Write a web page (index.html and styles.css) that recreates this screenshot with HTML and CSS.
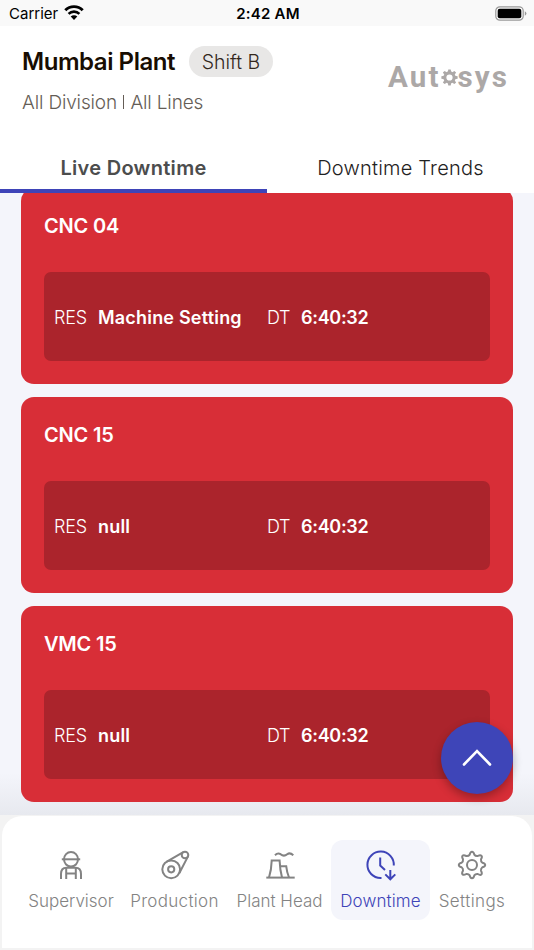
FILE: index.html
```
<!DOCTYPE html>
<html lang="en">
<head>
  <title>Autosys | Downtime</title>
  <meta charset="UTF-8">
  <meta name="viewport" content="width=device-width, initial-scale=1.0">
  <link rel="stylesheet" href="styles.css">
</head>
<body>
  <div class="app">
    <div class="status">
      <div class="carrier">
        <span>Carrier</span>
        <svg width="20" height="15" viewBox="0 0 20 15">
          <path d="M1.3 5.3 A12.2 12.2 0 0 1 18.7 5.3" fill="none" stroke="#000" stroke-width="2.9"/>
          <path d="M4.6 8.9 A7.6 7.6 0 0 1 15.4 8.9" fill="none" stroke="#000" stroke-width="2.6"/>
          <path d="M10 15 L6.7 11.6 A4.7 4.7 0 0 1 13.3 11.6 Z"/>
        </svg>
      </div>
      <span class="time">2:42 AM</span>
      <svg class="battery" width="32" height="16" viewBox="0 0 32 16">
        <rect x="0.8" y="0.8" width="27.4" height="13.4" rx="4" fill="none" stroke="#999" stroke-width="1.2"/>
        <rect x="2.7" y="2.7" width="23.6" height="9.6" rx="2"/>
        <path d="M29.8 5.2 Q31.4 6 31.4 7.5 Q31.4 9 29.8 9.8 Z" fill="#999"/>
      </svg>
    </div>

    <header class="header">
      <div>
        <div class="plant">
          <h1>Mumbai Plant</h1>
          <span class="shift"><span>Shift B</span></span>
        </div>
        <p class="lines">All Division <i></i> All Lines</p>
      </div>
      <div class="logo">
        <span>Aut</span>
        <svg width="17" height="17" viewBox="-9 -9 18 18">
          <circle r="4.9" fill="none" stroke="#aca8a7" stroke-width="3.2"/>
          <g fill="#aca8a7">
            <path id="tooth" d="M-1.9 -5.5 L-1.3 -8.6 H1.3 L1.9 -5.5 Z"/>
            <use href="#tooth" transform="rotate(45)"/>
            <use href="#tooth" transform="rotate(90)"/>
            <use href="#tooth" transform="rotate(135)"/>
            <use href="#tooth" transform="rotate(180)"/>
            <use href="#tooth" transform="rotate(225)"/>
            <use href="#tooth" transform="rotate(270)"/>
            <use href="#tooth" transform="rotate(315)"/>
          </g>
        </svg>
        <span>sys</span>
      </div>
    </header>

    <div class="tabs">
      <div class="tab active"><span>Live Downtime</span></div>
      <div class="tab"><span>Downtime Trends</span></div>
    </div>

    <main class="list">
      <div class="card">
        <h2>CNC 04</h2>
        <div class="info">
          <div class="res"><span class="label">RES</span><b>Machine Setting</b></div>
          <div class="dt"><span class="label">DT</span><b>6:40:32</b></div>
        </div>
      </div>
      <div class="card">
        <h2>CNC 15</h2>
        <div class="info">
          <div class="res"><span class="label">RES</span><b>null</b></div>
          <div class="dt"><span class="label">DT</span><b>6:40:32</b></div>
        </div>
      </div>
      <div class="card">
        <h2>VMC 15</h2>
        <div class="info">
          <div class="res"><span class="label">RES</span><b>null</b></div>
          <div class="dt"><span class="label">DT</span><b>6:40:32</b></div>
        </div>
      </div>
      <button class="to-top" aria-label="Up">
        <svg width="30" height="18" viewBox="0 0 30 18"><path d="M2 16.5 L15 3 L28 16.5" fill="none" stroke="#fff" stroke-width="2.6" stroke-linecap="round"/></svg>
      </button>
    </main>

    <div class="bottom">
      <nav class="nav">
        <a class="item supervisor">
          <svg width="32" height="32" viewBox="0 0 32 32">
            <path d="M6.8 10.3 H25.2"/>
            <path d="M9 10.3 A7 7.3 0 0 1 23 10.3 A7 7.3 0 0 1 9 10.3"/>
            <path d="M6 30 V25 Q6 18.8 11.5 18.8 H20.5 Q26 18.8 26 25 V30"/>
            <path d="M11.2 19 V30 M20.8 19 V30 M11.2 24.5 H20.8"/>
          </svg>
          <span>Supervisor</span>
        </a>
        <a class="item production">
          <svg width="32" height="32" viewBox="0 0 32 32">
            <circle cx="12.2" cy="20.3" r="8.9"/>
            <circle cx="12.2" cy="20.3" r="3.1"/>
            <circle cx="26" cy="6" r="3.3"/>
            <path d="M7.8 12.6 L24.3 3.1 M29 7.4 L20.4 24"/>
          </svg>
          <span>Production</span>
        </a>
        <a class="item plant-head">
          <svg width="32" height="32" viewBox="0 0 32 32">
            <path d="M2.3 28.6 H30.7"/>
            <path d="M5 28.5 Q7.4 21 7.7 11.6 H15.6 Q16 21 18 28.5"/>
            <path d="M16.2 17.2 H22.2 Q22.8 23 25 28.5"/>
            <path d="M11 6.2 Q13.8 3.4 16.6 5.2 Q19.9 8 23.2 5.2 Q26 3.2 29.3 6.2"/>
          </svg>
          <span>Plant Head</span>
        </a>
        <a class="item downtime active">
          <svg width="32" height="32" viewBox="0 0 32 32">
            <path d="M16.5 29 H15.5 A13.2 13.2 0 1 1 28.8 16.5"/>
            <path d="M15.2 8.5 V16.5 L20 21"/>
            <path d="M25.3 21 V30 M20.3 25.4 L25.3 30.3 L30.3 25.4"/>
          </svg>
          <span>Downtime</span>
        </a>
        <a class="item settings">
          <svg width="32" height="32" viewBox="0 0 32 32">
            <circle cx="16" cy="16" r="5"/>
            <path d="M13.7 5.6 Q14.4 2.8 16 2.8 T18.3 5.6 Q19.5 7.3 21.7 7 Q24.2 5.6 25.4 6.7 T25 10.3 Q24.7 12.4 26.4 13.7 Q29.2 14.4 29.2 16 T26.4 18.3 Q24.7 19.6 25 21.7 Q26.4 24.2 25.4 25.4 T21.7 25 Q19.5 24.7 18.3 26.4 Q17.6 29.2 16 29.2 T13.7 26.4 Q12.5 24.7 10.3 25 Q7.8 26.4 6.6 25.4 T7 21.7 Q7.3 19.6 5.6 18.3 Q2.8 17.6 2.8 16 T5.6 13.7 Q7.3 12.4 7 10.3 Q5.6 7.8 6.6 6.7 T10.3 7 Q12.5 7.3 13.7 5.6 Z"/>
          </svg>
          <span>Settings</span>
        </a>
      </nav>
    </div>
  </div>
</body>
</html>
```

FILE: styles.css
```
body {
  font-family: Inter, "Liberation Sans", sans-serif;
  margin: 0;
  background-color: #fff;
  overflow: hidden;
}

h1, h2, p {
  margin: 0;
}

span, b, h1, h2, p {
  white-space: nowrap;
}

.app {
  height: 950px;
  display: flex;
  flex-direction: column;
}

.status {
  height: 26px;
  box-sizing: border-box;
  padding: 1px 7px 0 9px;
  background-color: #f9f9f9;
  display: grid;
  grid-template-columns: 1fr auto 1fr;
  align-items: center;
  font-size: 15px;
}

.carrier {
  display: flex;
  align-items: center;
  gap: 6px;
}

.carrier svg {
  margin-top: -2px;
}

.time {
  font-weight: 600;
  letter-spacing: 0.2px;
}

.battery {
  justify-self: end;
}

.header {
  height: 118px;
  box-sizing: border-box;
  padding: 20px 25px 0 22px;
  display: flex;
  justify-content: space-between;
}

.plant {
  display: flex;
  align-items: center;
  height: 31px;
}

.plant h1 {
  width: 167px;
  font-size: 24px;
  font-weight: 600;
  color: #180d02;
  letter-spacing: -0.45px;
}

.shift {
  width: 84px;
  height: 31px;
  line-height: 33px;
  border-radius: 16px;
  background-color: #e8e7e6;
  color: #33271d;
  font-size: 19.5px;
  font-weight: 300;
  text-align: center;
}

.lines {
  margin-top: 13px;
  font-size: 19px;
  line-height: 25px;
  font-weight: 300;
  color: #655d56;
  letter-spacing: -0.15px;
}

.lines i {
  display: inline-block;
  width: 1px;
  height: 14px;
  margin: 0 1px;
  background-color: #655d56;
}

.logo {
  display: flex;
  align-items: center;
  height: 62px;
  font-family: Roboto, sans-serif;
  font-size: 29.5px;
  font-weight: 700;
  letter-spacing: 2.1px;
  color: #aca8a7;
}

.tabs {
  display: flex;
  height: 49px;
}

.tab {
  flex: 1;
  height: 49px;
  box-sizing: border-box;
  line-height: 49px;
  text-align: center;
  font-size: 20px;
  font-weight: 300;
  letter-spacing: 0.2px;
  color: #1f2222;
}

.tab.active {
  font-weight: 600;
  letter-spacing: 0.3px;
  color: #4c4d4d;
  border-bottom: 4px solid #3e44b8;
}

.list {
  position: relative;
  height: 622px;
  overflow: hidden;
  box-sizing: border-box;
  padding: 0 21px;
  background: linear-gradient(#f4f5fb 0, #f4f5fb 580px, #e7e9ef 622px);
}

.card {
  height: 196px;
  box-sizing: border-box;
  padding: 23px;
  margin-bottom: 13px;
  border-radius: 13px;
  background-color: #d82e37;
  color: #fff;
}

.card:first-child {
  margin-top: -5px;
}

.card h2 {
  height: 61px;
  line-height: 30px;
  font-size: 20px;
  font-weight: 600;
  letter-spacing: -0.2px;
}

.info {
  display: flex;
  align-items: center;
  height: 89px;
  box-sizing: border-box;
  padding: 2px 10px 0;
  border-radius: 7px;
  background-color: #ab242c;
  font-size: 18px;
}

.res {
  display: flex;
  width: 213px;
}

.dt {
  display: flex;
}

.res .label {
  width: 44px;
}

.dt .label {
  width: 34px;
}

.label {
  font-weight: 300;
  letter-spacing: -0.2px;
}

.info b {
  font-weight: 600;
}

.res b {
  letter-spacing: 0.2px;
}

.dt b {
  letter-spacing: -0.3px;
}

.to-top {
  position: absolute;
  right: 21px;
  bottom: 21px;
  width: 72px;
  height: 72px;
  padding: 0;
  border: none;
  border-radius: 50%;
  background-color: #3e45b8;
  box-shadow: 0 4px 10px rgba(0, 0, 0, 0.3);
}

.bottom {
  height: 135px;
  box-sizing: border-box;
  padding: 1px 2px 2px;
  background-color: #f3f3f3;
}

.nav {
  height: 132px;
  box-sizing: border-box;
  padding: 24px 18px 0 19px;
  border-radius: 20px 20px 0 0;
  background-color: #fff;
  display: flex;
}

.item {
  height: 80px;
  box-sizing: border-box;
  padding-top: 9px;
  display: flex;
  flex-direction: column;
  align-items: center;
  gap: 8px;
  border-radius: 12px;
  color: #838383;
  font-size: 17px;
  font-weight: 300;
  line-height: 24px;
}

.item svg {
  fill: none;
  stroke: currentColor;
  stroke-width: 2;
}

.item.active {
  background-color: #f4f5fb;
  color: #3e44b8;
}

.supervisor {
  width: 100px;
}

.production {
  width: 107px;
  letter-spacing: 0.3px;
}

.plant-head {
  width: 103px;
}

.downtime {
  width: 99px;
  letter-spacing: 0.1px;
}

.settings {
  width: 84px;
  letter-spacing: 0.4px;
}
```
